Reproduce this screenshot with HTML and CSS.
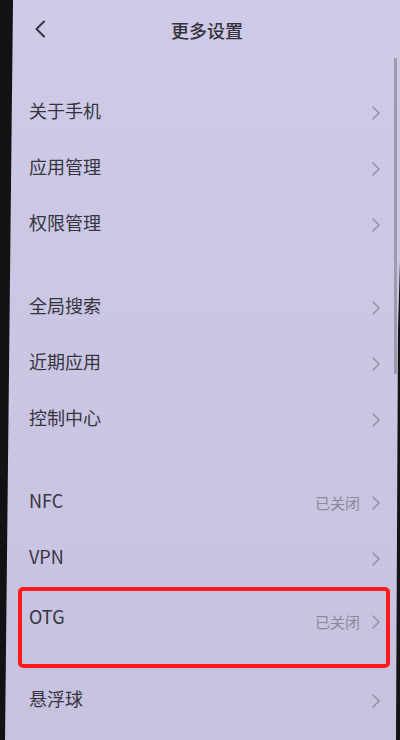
FILE: index.html
```html
<!DOCTYPE html>
<html lang="zh-CN">
<head>
<meta charset="utf-8">
<title>更多设置</title>
<link rel="stylesheet" href="styles.css">
</head>
<body>
<div class="screen">
  <header class="topbar">
    <span class="back">
      <svg width="12" height="18" viewBox="0 0 12 18"><path d="M10 1.5 L2.5 9 L10 16.5" fill="none" stroke="#35343c" stroke-width="2" stroke-linecap="round" stroke-linejoin="round"/></svg>
    </span>
    <h1 class="title">更多设置</h1>
  </header>

  <section class="group">
    <div class="row"><span class="label">关于手机</span><span class="right"><svg class="chev" viewBox="0 0 8 14"><path d="M1 1 L7 7 L1 13"/></svg></span></div>
    <div class="row"><span class="label">应用管理</span><span class="right"><svg class="chev" viewBox="0 0 8 14"><path d="M1 1 L7 7 L1 13"/></svg></span></div>
    <div class="row"><span class="label">权限管理</span><span class="right"><svg class="chev" viewBox="0 0 8 14"><path d="M1 1 L7 7 L1 13"/></svg></span></div>
  </section>

  <section class="group">
    <div class="row"><span class="label">全局搜索</span><span class="right"><svg class="chev" viewBox="0 0 8 14"><path d="M1 1 L7 7 L1 13"/></svg></span></div>
    <div class="row"><span class="label">近期应用</span><span class="right"><svg class="chev" viewBox="0 0 8 14"><path d="M1 1 L7 7 L1 13"/></svg></span></div>
    <div class="row"><span class="label">控制中心</span><span class="right"><svg class="chev" viewBox="0 0 8 14"><path d="M1 1 L7 7 L1 13"/></svg></span></div>
  </section>

  <section class="group">
    <div class="row"><span class="label">NFC</span><span class="right"><span class="value">已关闭</span><svg class="chev" viewBox="0 0 8 14"><path d="M1 1 L7 7 L1 13"/></svg></span></div>
    <div class="row"><span class="label">VPN</span><span class="right"><svg class="chev" viewBox="0 0 8 14"><path d="M1 1 L7 7 L1 13"/></svg></span></div>
    <div class="row row-tall"><span class="label">OTG</span><span class="right"><span class="value">已关闭</span><svg class="chev" viewBox="0 0 8 14"><path d="M1 1 L7 7 L1 13"/></svg></span><span class="highlight"></span></div>
    <div class="row"><span class="label">悬浮球</span><span class="right"><svg class="chev" viewBox="0 0 8 14"><path d="M1 1 L7 7 L1 13"/></svg></span></div>
  </section>

  <div class="scrollbar"></div>
  <div class="bezel-left"></div>
  <div class="bezel-right"></div>
</div>
</body>
</html>
```

FILE: styles.css
```css
html, body {
  margin: 0;
  padding: 0;
}
body {
  width: 400px;
  height: 740px;
  overflow: hidden;
  font-family: "Noto Sans CJK SC", "Noto Sans", sans-serif;
  color: #36353e;
}
.screen {
  position: relative;
  width: 400px;
  height: 740px;
  background: linear-gradient(180deg, #cecae7 0%, #cac6e4 45%, #c7c2e0 100%);
  overflow: hidden;
}
.topbar {
  height: 60px;
  display: flex;
  align-items: center;
  justify-content: center;
  position: relative;
  padding-left: 14px;
}
.back {
  position: absolute;
  left: 34px;
  top: 20px;
  display: flex;
}
.title {
  margin: 0;
  font-size: 18px;
  font-weight: 500;
  color: #34333b;
}
.group {
  margin-top: 22px;
}
.group + .group {
  margin-top: 27px;
}
.row {
  position: relative;
  height: 56px;
  display: flex;
  align-items: center;
  justify-content: space-between;
  padding: 0 20px 0 29px;
}
.row-tall {
  height: 86px;
  align-items: flex-start;
  padding-top: 19px;
  box-sizing: border-box;
}
.label {
  font-size: 18px;
  line-height: 26px;
  color: #36353e;
}
.right {
  display: flex;
  align-items: center;
  gap: 12px;
  padding-top: 6px;
}
.row-tall .right {
  padding-top: 9px;
}
.value {
  font-size: 15px;
  line-height: 20px;
  color: #8a8897;
}
.chev {
  width: 8px;
  height: 14px;
  fill: none;
  stroke: #8f8d9c;
  stroke-width: 1.4;
  stroke-linecap: round;
  stroke-linejoin: round;
}
.highlight {
  position: absolute;
  left: 18px;
  right: 10px;
  top: 3px;
  bottom: 2px;
  border: 4px solid #ff1a1a;
  border-radius: 5px;
  box-sizing: border-box;
}
.scrollbar {
  position: absolute;
  left: 394px;
  top: 58px;
  width: 3px;
  height: 316px;
  background: #9d9bab;
  border-radius: 1px;
}
.bezel-left {
  position: absolute;
  left: 0;
  top: 0;
  width: 14px;
  height: 740px;
  background: #121214;
  clip-path: polygon(0 0, 13px 0, 5px 740px, 0 740px);
}
.bezel-right {
  position: absolute;
  right: 0;
  top: 0;
  width: 5px;
  height: 740px;
  background: #141416;
  clip-path: polygon(5px 260px, 5px 740px, 1px 740px, 3px 330px);
}
```
